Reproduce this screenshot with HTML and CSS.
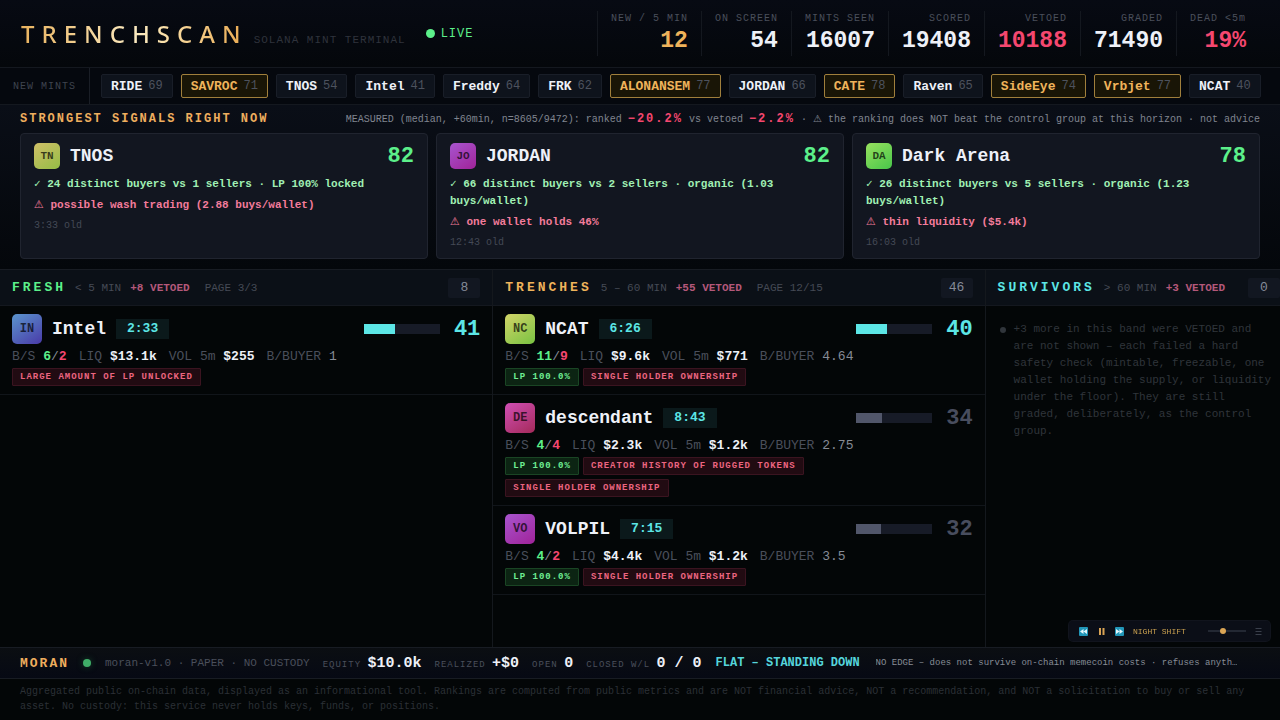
FILE: index.html
```html
<!DOCTYPE html>
<html lang="en">
<head>
    <meta charset="UTF-8">
    <meta name="viewport" content="width=device-width, initial-scale=1.0">
    <title>TRENCHSCAN</title>
    <link rel="stylesheet" href="styles.css">
</head>
<body>
    <header class="top">
        <h1 class="brand">TRENCHSCAN</h1>
        <span class="tagline">SOLANA MINT TERMINAL</span>
        <span class="live"><i class="live-dot"></i>LIVE</span>
        <dl class="stats">
            <div class="stat"><dt>NEW / 5 MIN</dt><dd class="gold">12</dd></div>
            <div class="stat"><dt>ON SCREEN</dt><dd>54</dd></div>
            <div class="stat"><dt>MINTS SEEN</dt><dd>16007</dd></div>
            <div class="stat"><dt>SCORED</dt><dd>19408</dd></div>
            <div class="stat"><dt>VETOED</dt><dd class="red">10188</dd></div>
            <div class="stat"><dt>GRADED</dt><dd>71490</dd></div>
            <div class="stat"><dt>DEAD &lt;5m</dt><dd class="red">19%</dd></div>
        </dl>
    </header>

    <div class="ticker">
        <span class="ticker-label">NEW MINTS</span>
        <ul class="chips">
            <li class="chip"><b>RIDE</b>69</li>
            <li class="chip hot"><b>SAVROC</b>71</li>
            <li class="chip"><b>TNOS</b>54</li>
            <li class="chip"><b>Intel</b>41</li>
            <li class="chip"><b>Freddy</b>64</li>
            <li class="chip"><b>FRK</b>62</li>
            <li class="chip hot"><b>ALONANSEM</b>77</li>
            <li class="chip"><b>JORDAN</b>66</li>
            <li class="chip hot"><b>CATE</b>78</li>
            <li class="chip"><b>Raven</b>65</li>
            <li class="chip hot"><b>SideEye</b>74</li>
            <li class="chip hot"><b>Vrbjet</b>77</li>
            <li class="chip"><b>NCAT</b>40</li>
        </ul>
    </div>

    <section class="signals">
        <div class="signals-head">
            <h2>STRONGEST SIGNALS RIGHT NOW</h2>
            <p>MEASURED (median, +60min, n=8605/9472): ranked <b>−20.2%</b> vs vetoed <b>−2.2%</b> · <span class="sign">⚠</span> the ranking does NOT beat the control group at this horizon · not advice</p>
        </div>
        <div class="cards">
            <article class="card">
                <div class="card-head">
                    <span class="avatar small olive">TN</span>
                    <h3>TNOS</h3>
                    <span class="card-score">82</span>
                </div>
                <p class="good">✓ 24 distinct buyers vs 1 sellers · LP 100% locked</p>
                <p class="warn"><span class="sign">⚠</span> possible wash trading (2.88 buys/wallet)</p>
                <p class="old">3:33 old</p>
            </article>
            <article class="card">
                <div class="card-head">
                    <span class="avatar small purple">JO</span>
                    <h3>JORDAN</h3>
                    <span class="card-score">82</span>
                </div>
                <p class="good">✓ 66 distinct buyers vs 2 sellers · organic (1.03 buys/wallet)</p>
                <p class="warn"><span class="sign">⚠</span> one wallet holds 46%</p>
                <p class="old">12:43 old</p>
            </article>
            <article class="card">
                <div class="card-head">
                    <span class="avatar small green">DA</span>
                    <h3>Dark Arena</h3>
                    <span class="card-score">78</span>
                </div>
                <p class="good">✓ 26 distinct buyers vs 5 sellers · organic (1.23 buys/wallet)</p>
                <p class="warn"><span class="sign">⚠</span> thin liquidity ($5.4k)</p>
                <p class="old">16:03 old</p>
            </article>
        </div>
    </section>

    <main class="board">
        <section class="col">
            <div class="col-head">
                <h2 class="c-fresh">FRESH</h2>
                <span>&lt; 5 MIN</span>
                <span class="vetoed">+8 VETOED</span>
                <span class="page">PAGE 3/3</span>
                <span class="count">8</span>
            </div>
            <article class="row">
                <div class="row-head">
                    <span class="avatar blue">IN</span>
                    <h3>Intel</h3>
                    <span class="age">2:33</span>
                    <span class="bar"><i style="width:41%"></i></span>
                    <span class="score">41</span>
                </div>
                <div class="metrics">
                    <span>B/S <b class="buy">6</b><em>/</em><b class="sell">2</b></span>
                    <span>LIQ <b>$13.1k</b></span>
                    <span>VOL 5m <b>$255</b></span>
                    <span>B/BUYER <em>1</em></span>
                </div>
                <div class="tags">
                    <span class="tag bad">LARGE AMOUNT OF LP UNLOCKED</span>
                </div>
            </article>
        </section>

        <section class="col">
            <div class="col-head">
                <h2 class="c-trenches">TRENCHES</h2>
                <span>5 – 60 MIN</span>
                <span class="vetoed">+55 VETOED</span>
                <span class="page">PAGE 12/15</span>
                <span class="count">46</span>
            </div>
            <article class="row">
                <div class="row-head">
                    <span class="avatar lime">NC</span>
                    <h3>NCAT</h3>
                    <span class="age">6:26</span>
                    <span class="bar"><i style="width:40%"></i></span>
                    <span class="score">40</span>
                </div>
                <div class="metrics">
                    <span>B/S <b class="buy">11</b><em>/</em><b class="sell">9</b></span>
                    <span>LIQ <b>$9.6k</b></span>
                    <span>VOL 5m <b>$771</b></span>
                    <span>B/BUYER <em>4.64</em></span>
                </div>
                <div class="tags">
                    <span class="tag ok">LP 100.0%</span>
                    <span class="tag bad">SINGLE HOLDER OWNERSHIP</span>
                </div>
            </article>
            <article class="row weak">
                <div class="row-head">
                    <span class="avatar pink">DE</span>
                    <h3>descendant</h3>
                    <span class="age">8:43</span>
                    <span class="bar"><i style="width:34%"></i></span>
                    <span class="score">34</span>
                </div>
                <div class="metrics">
                    <span>B/S <b class="buy">4</b><em>/</em><b class="sell">4</b></span>
                    <span>LIQ <b>$2.3k</b></span>
                    <span>VOL 5m <b>$1.2k</b></span>
                    <span>B/BUYER <em>2.75</em></span>
                </div>
                <div class="tags">
                    <span class="tag ok">LP 100.0%</span>
                    <span class="tag bad">CREATOR HISTORY OF RUGGED TOKENS</span>
                    <span class="tag bad">SINGLE HOLDER OWNERSHIP</span>
                </div>
            </article>
            <article class="row weak">
                <div class="row-head">
                    <span class="avatar purple">VO</span>
                    <h3>VOLPIL</h3>
                    <span class="age">7:15</span>
                    <span class="bar"><i style="width:32%"></i></span>
                    <span class="score">32</span>
                </div>
                <div class="metrics">
                    <span>B/S <b class="buy">4</b><em>/</em><b class="sell">2</b></span>
                    <span>LIQ <b>$4.4k</b></span>
                    <span>VOL 5m <b>$1.2k</b></span>
                    <span>B/BUYER <em>3.5</em></span>
                </div>
                <div class="tags">
                    <span class="tag ok">LP 100.0%</span>
                    <span class="tag bad">SINGLE HOLDER OWNERSHIP</span>
                </div>
            </article>
        </section>

        <section class="col">
            <div class="col-head tight">
                <h2 class="c-survivors">SURVIVORS</h2>
                <span>&gt; 60 MIN</span>
                <span class="vetoed">+3 VETOED</span>
                <span class="count">0</span>
            </div>
            <div class="note">
                <i class="note-dot"></i>
                <p>+3 more in this band were VETOED and are not shown – each failed a hard safety check (mintable, freezable, one wallet holding the supply, or liquidity under the floor). They are still graded, deliberately, as the control group.</p>
            </div>
        </section>
    </main>

    <div class="desk">
        <strong class="desk-name">MORAN</strong>
        <i class="desk-dot"></i>
        <span class="desk-mode">moran-v1.0 · PAPER · NO CUSTODY</span>
        <span class="figure">EQUITY <b>$10.0k</b></span>
        <span class="figure">REALIZED <b>+$0</b></span>
        <span class="figure">OPEN <b>0</b></span>
        <span class="figure">CLOSED W/L <b>0 / 0</b></span>
        <span class="desk-state">FLAT – STANDING DOWN</span>
        <span class="desk-why">NO EDGE – does not survive on-chain memecoin costs · refuses anyth…</span>
    </div>

    <footer class="legal">Aggregated public on-chain data, displayed as an informational tool. Rankings are computed from public metrics and are NOT financial advice, NOT a recommendation, and NOT a solicitation to buy or sell any asset. No custody: this service never holds keys, funds, or positions.</footer>

    <!-- music player -->
    <div class="player">
        <button type="button" aria-label="Previous">
            <svg width="9" height="9" viewBox="0 0 18 18"><rect width="18" height="18" rx="2" fill="#2196b8"/><path d="M9 4v10L2 9zM16 4v10L9 9z" fill="#e4f6fb"/></svg>
        </button>
        <button type="button" aria-label="Pause">
            <svg width="9" height="9" viewBox="0 0 18 18"><path d="M4 2h4v14H4zM11 2h4v14h-4z" fill="#d9a355"/></svg>
        </button>
        <button type="button" aria-label="Next">
            <svg width="9" height="9" viewBox="0 0 18 18"><rect width="18" height="18" rx="2" fill="#2196b8"/><path d="M2 4v10l7-5zM9 4v10l7-5z" fill="#e4f6fb"/></svg>
        </button>
        <span class="track">NIGHT SHIFT</span>
        <input class="volume" type="range" min="0" max="100" value="36" aria-label="Volume">
        <button type="button" aria-label="Playlist">
            <svg width="7" height="9" viewBox="0 0 14 18"><path d="M1 3h12M1 9h12M1 15h12" stroke="#3a3f4b" stroke-width="2"/></svg>
        </button>
    </div>
</body>
</html>
```
FILE: styles.css
```css
* {
    box-sizing: border-box;
}
body {
    margin: 0;
    min-height: 100vh;
    display: flex;
    flex-direction: column;
    background: #030607;
    color: #eef1f8;
    font-family: "Liberation Mono", "DejaVu Sans Mono", monospace;
    font-size: 13px;
}
h1, h2, h3, p, dl, dd, ul {
    margin: 0;
    padding: 0;
}
em, i {
    font-style: normal;
}

/* header */
.top {
    display: flex;
    align-items: center;
    height: 68px;
    padding: 0 21px;
    background: linear-gradient(#070a13, #04070b);
    border-bottom: 1px solid #14181f;
}
.brand {
    font-family: "Noto Sans", sans-serif;
    font-size: 24px;
    font-weight: 500;
    letter-spacing: 7px;
    background: linear-gradient(90deg, #e9b35f, #fbeac0 50%, #fbe4b0 60%, #e9a94f);
    -webkit-background-clip: text;
    background-clip: text;
    color: transparent;
}
.tagline {
    margin: 12px 0 0 6px;
    font-size: 11px;
    letter-spacing: 1px;
    color: #2f333c;
}
.live {
    display: flex;
    align-items: center;
    gap: 6px;
    margin-left: 20px;
    font-size: 12px;
    letter-spacing: 1px;
    color: #5cf08a;
}
.live-dot {
    width: 9px;
    height: 9px;
    border-radius: 50%;
    background: #5cf08a;
}
.stats {
    display: flex;
    margin-left: auto;
}
.stat {
    padding: 0 13px;
    border-left: 1px solid #14181f;
    text-align: right;
}
.stat dt {
    font-size: 10px;
    line-height: 16px;
    letter-spacing: 1px;
    color: #4a4f5b;
}
.stat dd {
    font-size: 23px;
    line-height: 29px;
    font-weight: 700;
}
.stat .gold {
    color: #efb35b;
}
.stat .red {
    color: #f5476f;
}

/* ticker */
.ticker {
    display: flex;
    align-items: stretch;
    height: 37px;
    background: #05080e;
    border-bottom: 1px solid #14181f;
    overflow: hidden;
}
.ticker-label {
    display: flex;
    align-items: center;
    padding: 0 13px;
    border-right: 1px solid #1a1e26;
    font-size: 10px;
    letter-spacing: 1px;
    color: #3f444f;
}
.chips {
    display: flex;
    align-items: center;
    gap: 8px;
    padding-left: 11px;
    list-style: none;
}
.chip {
    display: flex;
    align-items: center;
    gap: 6px;
    height: 24px;
    padding: 0 9px;
    border: 1px solid #191e28;
    border-radius: 2px;
    background: #0e131c;
    font-size: 12px;
    color: #4d525e;
}
.chip b {
    font-size: 13px;
    color: #eef1f8;
}
.chip.hot {
    border-color: #a07f3c;
    background: #191506;
}
.chip.hot b {
    color: #efb35b;
}

/* strongest signals */
.signals {
    padding: 0 20px 10px;
    background: linear-gradient(#0a0e17, #04070b);
}
.signals-head {
    display: flex;
    align-items: center;
    justify-content: space-between;
    height: 28px;
}
.signals-head h2 {
    font-size: 12px;
    letter-spacing: 2px;
    color: #efae5e;
}
.signals-head p {
    font-size: 10px;
    color: #808590;
}
.signals-head b {
    font-size: 12px;
    letter-spacing: 2px;
    color: #f5476f;
}
.sign {
    font-family: "DejaVu Sans", sans-serif;
    font-weight: 400;
    line-height: 1;
}
.cards {
    display: grid;
    grid-template-columns: repeat(3, 1fr);
    gap: 8px;
}
.card {
    padding: 9px 13px 8px;
    border: 1px solid #20242f;
    border-radius: 4px;
    background: #121620;
}
.card-head {
    display: flex;
    align-items: center;
    gap: 10px;
    height: 26px;
    margin-bottom: 7px;
}
.card h3, .row h3 {
    font-size: 18px;
    font-weight: 700;
}
.card-score {
    margin-left: auto;
    font-size: 22px;
    font-weight: 700;
    color: #5cf08a;
}
.card p {
    margin-bottom: 4px;
    font-size: 11px;
    line-height: 17px;
    font-weight: 700;
}
.card .good {
    color: #a0f0b4;
}
.card .warn {
    color: #f37c9b;
}
.card .old {
    margin: 0;
    font-size: 10px;
    line-height: 15px;
    font-weight: 400;
    color: #444955;
}

.avatar {
    display: flex;
    align-items: center;
    justify-content: center;
    width: 30px;
    height: 30px;
    border-radius: 5px;
    font-size: 12px;
    font-weight: 700;
    color: rgba(0, 0, 0, .7);
}
.avatar.small {
    width: 26px;
    height: 26px;
    font-size: 11px;
}
.olive { background: linear-gradient(145deg, #d0bf68, #94bd45); }
.purple { background: linear-gradient(145deg, #a855cf, #a02399); }
.green { background: linear-gradient(145deg, #98e15f, #48c64a); }
.blue { background: linear-gradient(145deg, #5b95cd, #493aa8); }
.lime { background: linear-gradient(145deg, #d2d468, #79c242); }
.pink { background: linear-gradient(145deg, #d04fb5, #a42a59); }

/* board */
.board {
    flex: 1;
    display: grid;
    grid-template-columns: 5fr 5fr 3fr;
    border-top: 1px solid #181c23;
}
.col {
    min-width: 0;
}
.col + .col {
    border-left: 1px solid #14181d;
}
.col-head {
    display: flex;
    align-items: center;
    gap: 9px;
    height: 36px;
    padding: 0 12px;
    background: #0b1017;
    border-bottom: 1px solid #14181f;
    font-size: 11px;
    white-space: nowrap;
    color: #454a55;
}
.col-head.tight {
    padding-right: 0;
}
.col-head h2 {
    font-size: 13px;
    letter-spacing: 3px;
}
.c-fresh { color: #5cf08a; }
.c-trenches { color: #efb35b; }
.c-survivors { color: #5ce6e6; }
.col-head .vetoed {
    font-weight: 700;
    color: #b4587a;
}
.col-head .page {
    margin-left: 6px;
}
.count {
    min-width: 32px;
    margin-left: auto;
    border-radius: 2px;
    background: #121721;
    font-size: 13px;
    line-height: 20px;
    text-align: center;
    color: #858b98;
}

.row {
    padding: 8px 12px;
    border-bottom: 1px solid #11151a;
}
.row-head {
    display: flex;
    align-items: center;
    gap: 10px;
}
.age {
    padding: 0 11px;
    background: #0b191b;
    line-height: 20px;
    font-weight: 700;
    color: #5ce6e6;
}
.bar {
    width: 76px;
    height: 10px;
    margin-left: auto;
    background: #171b27;
}
.bar i {
    display: block;
    height: 100%;
    background: #5ce6e6;
}
.score {
    margin-left: 4px;
    font-size: 22px;
    font-weight: 700;
    color: #5ce6e6;
}
.weak .bar i {
    background: #51566a;
}
.weak .score {
    color: #484d5e;
}
.metrics {
    display: flex;
    gap: 12px;
    margin: 4px 0 3px;
    line-height: 17px;
    color: #4a4f5b;
}
.metrics b {
    color: #eef1f8;
}
.metrics em {
    color: #868b96;
}
.metrics .buy {
    color: #5cf08a;
}
.metrics .sell {
    color: #f5476f;
}
.tags {
    display: flex;
    flex-wrap: wrap;
    gap: 4px;
    padding-right: 24px;
}
.tag {
    padding: 0 7px;
    border: 1px solid;
    border-radius: 1px;
    font-size: 9px;
    line-height: 16px;
    letter-spacing: 1px;
    font-weight: 700;
}
.tag.bad {
    border-color: #3b1420;
    background: #210b12;
    color: #ec6580;
}
.tag.ok {
    border-color: #1a4524;
    background: #0c2413;
    color: #6ff094;
}

.note {
    display: flex;
    gap: 8px;
    padding: 15px 4px 0 14px;
    font-size: 11px;
    line-height: 17px;
    color: #30353b;
}
.note-dot {
    flex: none;
    width: 6px;
    height: 6px;
    margin-top: 6px;
    border-radius: 50%;
    background: #30353b;
}

/* desk strip */
.desk {
    display: flex;
    align-items: center;
    height: 32px;
    padding: 0 20px;
    background: linear-gradient(#0b0e12, #060914);
    border-top: 1px solid #181c23;
    border-bottom: 1px solid #181c23;
    white-space: nowrap;
}
.desk-name {
    letter-spacing: 2px;
    color: #efae5e;
}
.desk-dot {
    flex: none;
    width: 8px;
    height: 8px;
    margin: 0 14px;
    border-radius: 50%;
    background: #3fae68;
    box-shadow: 0 0 6px #14432a;
}
.desk-mode {
    font-size: 11px;
    color: #4a4f5b;
}
.figure {
    margin-left: 13px;
    font-size: 9px;
    letter-spacing: 1px;
    color: #4a4f5b;
}
.figure b {
    font-size: 15px;
    letter-spacing: 0;
    color: #eef1f8;
}
.desk-state {
    margin-left: 14px;
    font-size: 12px;
    font-weight: 700;
    color: #55d5dc;
}
.desk-why {
    min-width: 0;
    margin-left: 16px;
    overflow: hidden;
    text-overflow: ellipsis;
    font-size: 9px;
    color: #878c97;
}

.legal {
    padding: 5px 20px 6px;
    font-size: 10px;
    line-height: 15px;
    color: #2b3036;
}

.player {
    position: fixed;
    right: 10px;
    bottom: 79px;
    display: flex;
    align-items: center;
    width: 201px;
    height: 20px;
    padding: 0 8px 0 10px;
    border-radius: 4px;
    background: #0b0e17;
    box-shadow: 0 0 0 1px #11141d;
}
.player button {
    display: flex;
    margin-right: 9px;
    padding: 0;
    border: 0;
    background: none;
}
.player button:last-child {
    margin: 0;
}
.track {
    margin-right: auto;
    font-size: 8px;
    color: #c9a050;
}
.volume {
    appearance: none;
    width: 38px;
    height: 10px;
    margin: 0 9px 0 0;
    background: none;
}
.volume::-webkit-slider-runnable-track {
    height: 2px;
    background: #232833;
}
.volume::-webkit-slider-thumb {
    appearance: none;
    width: 6px;
    height: 6px;
    margin-top: -2px;
    border-radius: 50%;
    background: #dba555;
}
```
